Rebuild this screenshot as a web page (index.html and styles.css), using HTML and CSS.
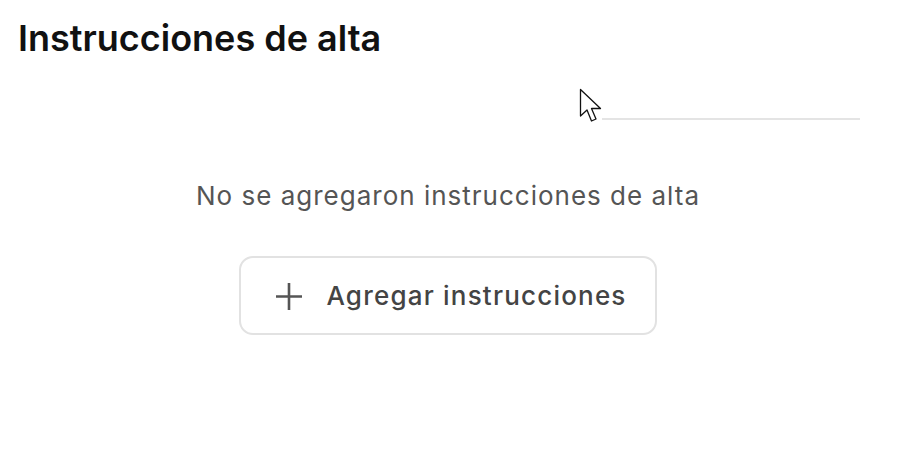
FILE: index.html
```html
<!DOCTYPE html>
<html lang="es">
<head>
<meta charset="utf-8">
<link rel="stylesheet" href="styles.css">
</head>
<body>
<div class="page">
  <h1 class="title">Instrucciones de alta</h1>
  <div class="divider-row"><div class="divider"></div></div>
  <div class="empty">
    <p class="empty-text">No se agregaron instrucciones de alta</p>
    <button class="add-btn" type="button">
      <svg class="plus" width="26" height="28" viewBox="0 0 26 28" aria-hidden="true">
        <path d="M13 1v27M0 14.5h26" stroke="#555" stroke-width="2.6" fill="none"/>
      </svg>
      <span>Agregar instrucciones</span>
    </button>
  </div>
  <svg class="cursor" width="26" height="40" viewBox="0 0 26 40" aria-hidden="true">
    <path d="M1.5 1.5 L1.5 28 L8 22 L12.5 33 L17 31 L12.5 20.5 L21.5 20.5 Z" fill="#fff" stroke="#111" stroke-width="1.3" stroke-linejoin="round"/>
  </svg>
</div>
</body>
</html>
```
FILE: styles.css
```css
html, body {
  margin: 0;
  padding: 0;
  background: #fff;
}
body {
  font-family: Inter, "Noto Sans", sans-serif;
  width: 900px;
  height: 450px;
  overflow: hidden;
}
.page {
  position: relative;
  padding: 16px 40px 0 18px;
}
.title {
  margin: 0;
  font-size: 36px;
  line-height: 44px;
  font-weight: 600;
  color: #111;
}
.divider-row {
  display: flex;
  justify-content: flex-end;
  margin-top: 58px;
}
.divider {
  width: 258px;
  height: 2px;
  background: #e4e4e4;
}
.empty {
  display: flex;
  flex-direction: column;
  align-items: center;
  margin-top: 60px;
  padding-left: 18px;
}
.empty-text {
  margin: 0;
  font-size: 26px;
  line-height: 32px;
  letter-spacing: 1px;
  color: #555;
}
.add-btn {
  margin-top: 44px;
  display: flex;
  align-items: center;
  gap: 24px;
  height: 79px;
  padding: 0 28px 0 35px;
  background: #fff;
  border: 2px solid #e2e2e2;
  border-radius: 14px;
  font-family: Inter, "Noto Sans", sans-serif;
  font-size: 26px;
  font-weight: 500;
  letter-spacing: 1.2px;
  color: #444;
}
.plus {
  display: block;
}
.cursor {
  position: absolute;
  left: 579px;
  top: 88px;
}
```
